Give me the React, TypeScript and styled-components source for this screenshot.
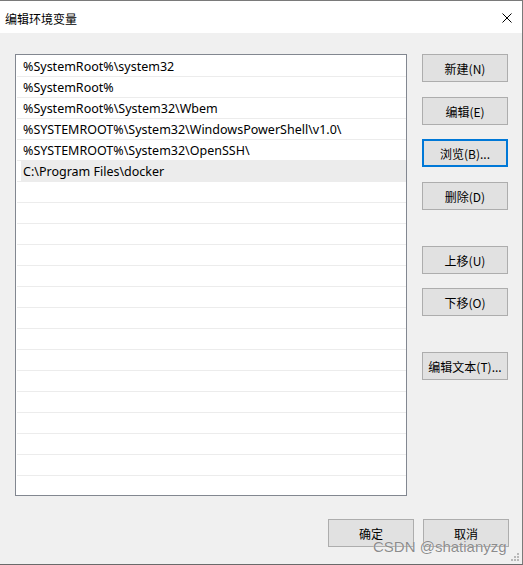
import React from "react";
import styled, { createGlobalStyle, css } from "styled-components";

const Global = createGlobalStyle`
  html, body { margin: 0; padding: 0; background: #f0f0f0; }
  body { font-family: "Noto Sans", "Noto Sans CJK SC", sans-serif; }
  * { box-sizing: border-box; }
`;

const Window = styled.div`
  position: relative;
  width: 523px;
  height: 565px;
  background: #f0f0f0;
  border-top: 1px solid #7a7a7a;
  border-right: 1px solid #7a7a7a;
  border-bottom: 1px solid #6a6a6a;
  display: flex;
  flex-direction: column;
  overflow: hidden;
`;

const TitleBar = styled.div`
  height: 32px;
  background: #ffffff;
  display: flex;
  align-items: center;
  justify-content: space-between;
  padding: 0 9px 0 5px;
  flex-shrink: 0;
`;

const Title = styled.span`
  font-family: "Noto Sans CJK SC", sans-serif;
  font-size: 12px;
  color: #000;
  line-height: 16px;
  margin-top: 3px;
`;

const CloseIcon = styled.svg`
  width: 10px;
  height: 10px;
  margin-right: 1px;
  margin-top: 1px;
`;

const Body = styled.div`
  flex: 1;
  display: flex;
  flex-direction: column;
  padding: 21px 13px 0 15px;
`;

const MainRow = styled.div`
  display: flex;
  gap: 15px;
`;

const ListBox = styled.div`
  width: 392px;
  height: 442px;
  background: #ffffff;
  border: 1px solid #828790;
  padding: 1px 0 0 1px;
  overflow: hidden;
`;

const Row = styled.div`
  height: 21px;
  border-bottom: 1px solid #ececec;
  display: flex;
`;

const RowInner = styled.div<{ $selected?: boolean }>`
  flex: 1;
  margin-left: 4px;
  padding: 2px 0 0 2px;
  font-family: "Noto Sans", sans-serif;
  font-size: 12.5px;
  line-height: 18px;
  color: #000;
  white-space: nowrap;
  ${(p) =>
    p.$selected &&
    css`
      background: #ececec;
    `}
`;

const ButtonColumn = styled.div`
  width: 86px;
  display: flex;
  flex-direction: column;
`;

const Button = styled.button<{ $gap?: number; $focused?: boolean }>`
  width: 86px;
  height: 28px;
  margin: ${(p) => p.$gap ?? 0}px 0 0 0;
  padding: 1px 0 0 0;
  background: #e1e1e1;
  border: 1px solid #adadad;
  font-family: "Noto Sans CJK SC", sans-serif;
  font-size: 12px;
  color: #000;
  display: flex;
  align-items: center;
  justify-content: center;
  line-height: 16px;
  ${(p) =>
    p.$focused &&
    css`
      border: 2px solid #0078d7;
    `}
`;

const Footer = styled.div`
  display: flex;
  justify-content: flex-end;
  gap: 9px;
  margin-top: 23px;
`;

const Watermark = styled.span`
  position: absolute;
  left: 373px;
  top: 537px;
  font-family: "Liberation Sans", Arial, sans-serif;
  font-size: 15px;
  color: rgba(120, 120, 120, 0.85);
  text-shadow: 0 0 1px rgba(255, 255, 255, 0.9);
  white-space: nowrap;
  pointer-events: none;
`;

const Grip = styled.svg`
  position: absolute;
  right: 3px;
  bottom: 2px;
  width: 10px;
  height: 10px;
`;

const paths = [
  "%SystemRoot%\\system32",
  "%SystemRoot%",
  "%SystemRoot%\\System32\\Wbem",
  "%SYSTEMROOT%\\System32\\WindowsPowerShell\\v1.0\\",
  "%SYSTEMROOT%\\System32\\OpenSSH\\",
  "C:\\Program Files\\docker",
];

const TOTAL_ROWS = 21;

const sideButtons: { label: string; gap: number; focused?: boolean }[] = [
  { label: "新建(N)", gap: 0 },
  { label: "编辑(E)", gap: 15 },
  { label: "浏览(B)...", gap: 14, focused: true },
  { label: "删除(D)", gap: 15 },
  { label: "上移(U)", gap: 36 },
  { label: "下移(O)", gap: 14 },
  { label: "编辑文本(T)...", gap: 36 },
];

export default function App() {
  const rows = Array.from({ length: TOTAL_ROWS }, (_, i) => paths[i] ?? "");
  return (
    <>
      <Global />
      <Window>
        <TitleBar>
          <Title>编辑环境变量</Title>
          <CloseIcon viewBox="0 0 10 10">
            <path d="M0.5 0.5 L9.5 9.5 M9.5 0.5 L0.5 9.5" stroke="#000" strokeWidth="1" fill="none" />
          </CloseIcon>
        </TitleBar>
        <Body>
          <MainRow>
            <ListBox>
              {rows.map((text, i) => (
                <Row key={i}>
                  <RowInner $selected={i === 5}>{text}</RowInner>
                </Row>
              ))}
            </ListBox>
            <ButtonColumn>
              {sideButtons.map((b) => (
                <Button key={b.label} $gap={b.gap} $focused={b.focused}>
                  {b.label}
                </Button>
              ))}
            </ButtonColumn>
          </MainRow>
          <Footer>
            <Button>确定</Button>
            <Button>取消</Button>
          </Footer>
        </Body>
        <Watermark>CSDN @shatianyzg</Watermark>
        <Grip viewBox="0 0 10 10">
          {[
            [8, 0],
            [5, 3],
            [8, 3],
            [2, 6],
            [5, 6],
            [8, 6],
          ].map(([x, y], i) => (
            <rect key={i} x={x} y={y + 1} width="2" height="2" fill="#b8b8b8" />
          ))}
        </Grip>
      </Window>
    </>
  );
}
